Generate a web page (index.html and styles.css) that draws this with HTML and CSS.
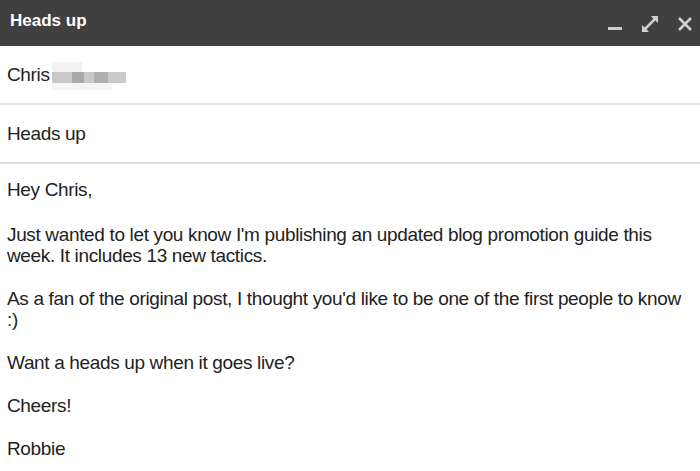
FILE: index.html
```html
<!DOCTYPE html>
<html>
<head>
<meta charset="utf-8">
<link rel="stylesheet" href="styles.css">
</head>
<body>
<div class="compose">
  <div class="titlebar">
    <div class="title">Heads up</div>
    <div class="controls">
      <svg class="ic" width="16" height="18" viewBox="0 0 16 18"><rect x="1" y="12" width="14" height="3" fill="#cfcfcf"/></svg>
      <svg class="ic" width="18" height="18" viewBox="0 0 18 18" fill="#cfcfcf"><path d="M10 1h7v7l-2.6-2.6-8.8 8.8L8 17H1v-7l2.6 2.6 8.8-8.8z"/></svg>
      <svg class="ic" width="16" height="16" viewBox="0 0 16 16"><path d="M2 2L14 14M14 2L2 14" stroke="#cfcfcf" stroke-width="2.6"/></svg>
    </div>
  </div>
  <div class="field">
    <span>Chris</span>
    <span class="blur">
      <span class="bl b1"></span><span class="bl b2"></span><span class="bl b3"></span><span class="bl b4"></span><span class="bl b5"></span>
    </span>
  </div>
  <div class="field">Heads up</div>
  <div class="body">
    <p class="greet">Hey Chris,</p>
    <p>Just wanted to let you know I'm publishing an updated blog promotion guide this week. It includes 13 new tactics.</p>
    <p>As a fan of the original post, I thought you'd like to be one of the first people to know :)</p>
    <p>Want a heads up when it goes live?</p>
    <p>Cheers!</p>
    <p>Robbie</p>
  </div>
</div>
</body>
</html>
```

FILE: styles.css
```css
html, body { margin: 0; padding: 0; background: #fff; }
body { font-family: "Liberation Sans", Arial, sans-serif; color: #222; }
.compose { width: 700px; height: 471px; overflow: hidden; }
.titlebar {
  height: 46px; background: #404040; display: flex; align-items: center;
  justify-content: space-between; padding: 0 7px 0 10px; box-sizing: border-box;
}
.title { color: #fff; font-weight: bold; font-size: 17px; margin-top: -4px; }
.controls { display: flex; align-items: center; gap: 18px; margin-top: 2px; }
.ic { display: block; }
.field {
  height: 57px; border-bottom: 2px solid #e0e0e0; display: flex; align-items: center;
  padding-left: 7px; font-size: 19px; letter-spacing: -0.35px; box-sizing: content-box;
}
.field:first-of-type { padding-top: 1px; height: 56px; }
.field + .field { height: 56px; padding-top: 1px; }
.blur { position: relative; display: inline-block; width: 74px; height: 30px; margin-left: 2px; }
.bl { position: absolute; background: #bdbdbd; }
.b1 { left: 0; top: 12px; width: 74px; height: 11px; background: #c9c9c9; }
.b2 { left: 20px; top: 12px; width: 12px; height: 11px; background: #a9a9a9; }
.b3 { left: 42px; top: 12px; width: 14px; height: 11px; background: #b0b0b0; }
.b4 { left: 0; top: 2px; width: 30px; height: 10px; background: #f2f2f2; }
.b5 { left: 0; top: 23px; width: 60px; height: 7px; background: #f5f5f5; }
.body { padding: 15px 9px 0 7px; font-size: 19px; letter-spacing: -0.35px; line-height: 21px; }
.body p { margin: 0 0 22px 0; }
.body p.greet { margin-bottom: 24px; }
```
